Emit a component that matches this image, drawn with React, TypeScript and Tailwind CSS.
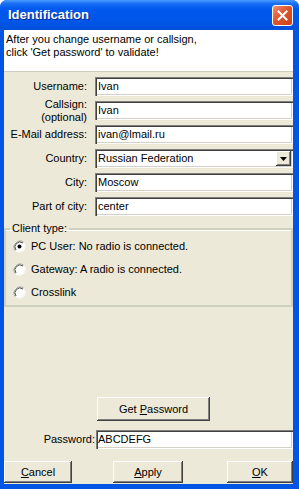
import React from "react";

const sunken =
  "bg-white shadow-[inset_1px_1px_#808080,inset_2px_2px_#404040,inset_-1px_-1px_#ffffff,inset_-2px_-2px_#d4d0c8]";
const raised =
  "bg-[#ece9d8] shadow-[inset_-1px_-1px_#404040,inset_1px_1px_#ffffff,inset_-2px_-2px_#808080]";

function Field({ label, value, lines }: { label: string; value: string; lines?: string[] }) {
  return (
    <div className="flex h-[19px] items-center">
      <div className="w-[83px] shrink-0 text-right leading-[13px]">
        {lines ? lines.map((l) => <div key={l}>{l}</div>) : label}
      </div>
      <div className={`ml-[8px] h-[19px] flex-1 ${sunken} flex items-center pl-[3px]`}>{value}</div>
    </div>
  );
}

function Radio({ checked, label }: { checked?: boolean; label: string }) {
  return (
    <div className="flex h-[13px] items-center">
      <svg width="13" height="13" viewBox="0 0 13 13" className="ml-[7px] shrink-0">
        <circle cx="6.5" cy="6.5" r="6" fill="#ffffff" />
        <path d="M2.3 10.7 A6 6 0 0 1 10.7 2.3" fill="none" stroke="#9a9a90" strokeWidth="1" />
        <path d="M3 10 A5 5 0 0 1 10 3" fill="none" stroke="#505050" strokeWidth="1" />
        <path d="M10.7 2.3 A6 6 0 0 1 2.3 10.7" fill="none" stroke="#f4f3ee" strokeWidth="1" />
        {checked && <circle cx="6.5" cy="6.5" r="2" fill="#000000" />}
      </svg>
      <span className="ml-[5px]">{label}</span>
    </div>
  );
}

function Btn({ children, className }: { children: React.ReactNode; className?: string }) {
  return (
    <div className={`flex shrink-0 items-center justify-center ${raised} ${className ?? ""}`}>{children}</div>
  );
}

export default function App() {
  return (
    <div
      className="flex h-[489px] w-[299px] flex-col overflow-hidden rounded-t-[7px] bg-[#0055e5] text-[11px] text-black"
      style={{ fontFamily: '"Liberation Sans", Arial, sans-serif' }}
    >
      {/* title bar */}
      <div className="flex h-[30px] shrink-0 items-center bg-[linear-gradient(180deg,#4a9bff_0%,#1a6ff5_12%,#0058ee_30%,#0056e8_70%,#0050d8_100%)] pl-[8px] pr-[6px]">
        <span className="text-[13px] font-bold text-white [text-shadow:1px_1px_#0a2a8a]">Identification</span>
        <div className="ml-auto flex h-[21px] w-[21px] items-center justify-center rounded-[3px] border border-white bg-[linear-gradient(135deg,#f0907a_0%,#e0552d_45%,#c8401a_100%)]">
          <svg width="11" height="11" viewBox="0 0 11 11">
            <path d="M1.5 1.5 L9.5 9.5 M9.5 1.5 L1.5 9.5" stroke="#ffffff" strokeWidth="2" strokeLinecap="square" />
          </svg>
        </div>
      </div>

      {/* body */}
      <div className="ml-[4px] mr-[6px] mb-[5px] flex flex-1 flex-col bg-[#ece9d8]">
        <div className="h-[42px] shrink-0 bg-white pl-[2px] pt-[3px] leading-[13px] shadow-[inset_0_-1px_#d0cdbf]">
          <div>After you change username or callsign,</div>
          <div>click 'Get password' to validate!</div>
        </div>

        <div className="mt-[5px] flex flex-col gap-[5px]">
          <Field label="Username:" value="Ivan" />
          <Field label="" lines={["Callsign:", "(optional)"]} value="Ivan" />
          <Field label="E-Mail address:" value="ivan@lmail.ru" />
          <div className="flex h-[19px] items-center">
            <div className="w-[83px] shrink-0 text-right">Country:</div>
            <div className={`ml-[8px] flex h-[19px] flex-1 items-center pl-[3px] ${sunken}`}>
              <span className="flex-1">Russian Federation</span>
              <div className={`mr-[2px] flex h-[15px] w-[15px] items-center justify-center ${raised}`}>
                <svg width="7" height="4" viewBox="0 0 7 4">
                  <path d="M0 0 H7 L3.5 4 Z" fill="#000" />
                </svg>
              </div>
            </div>
          </div>
          <Field label="City:" value="Moscow" />
          <Field label="Part of city:" value="center" />
        </div>

        {/* group box */}
        <fieldset className="mt-[6px] h-[85px] shrink-0 border-2 border-[#d0d0bf] px-0 shadow-[inset_0_1px_#fff]">
          <legend className="ml-[4px] px-[2px] leading-[13px]">Client type:</legend>
          <div className="mt-[5px] flex flex-col gap-[10px]">
            <Radio checked label="PC User: No radio is connected." />
            <Radio label="Gateway: A radio is connected." />
            <Radio label="Crosslink" />
          </div>
        </fieldset>

        <div className="mt-[90px] flex">
          <Btn className="ml-[93px] h-[24px] w-[113px]">
            <span>
              Get <span className="underline">P</span>assword
            </span>
          </Btn>
        </div>

        <div className="mt-[9px] flex h-[19px] shrink-0 items-center">
          <div className="w-[91px] shrink-0 text-right">Password:</div>
          <div className={`ml-[1px] flex h-[19px] flex-1 items-center pl-[2px] ${sunken}`}>ABCDEFG</div>
        </div>

        <div className="mt-[12px] flex h-[22px] shrink-0">
          <Btn className="w-[68px]">
            <span>
              <span className="underline">C</span>ancel
            </span>
          </Btn>
          <Btn className="ml-[41px] w-[70px]">
            <span>
              <span className="underline">A</span>pply
            </span>
          </Btn>
          <Btn className="ml-[44px] w-[66px]">
            <span>
              <span className="underline">O</span>K
            </span>
          </Btn>
        </div>
      </div>
    </div>
  );
}
